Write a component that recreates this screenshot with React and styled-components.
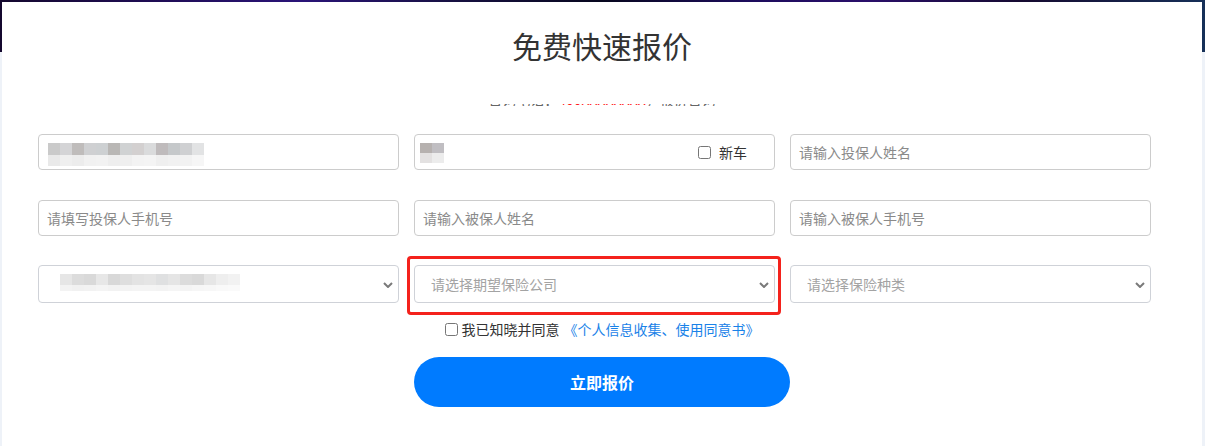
import React from "react";
import styled, { createGlobalStyle } from "styled-components";

const GlobalStyle = createGlobalStyle`
  html, body { margin: 0; padding: 0; }
  body {
    font-family: "Noto Sans CJK SC", "Noto Sans", "Liberation Sans", sans-serif;
    background: #eef2f8;
  }
  * { box-sizing: border-box; }
`;

const Page = styled.div`
  width: 1205px;
  height: 446px;
  overflow: hidden;
  padding: 2px 3px 0 2px;
  background:
    linear-gradient(90deg, #14082e 0%, #1e0c52 12%, #2a1478 25%, #161040 38%, #07071e 50%, #1c0c5c 62%, #2a0f6a 72%, #150a30 85%, #163058 100%) top / 100% 52px no-repeat,
    #eef2f8;
`;

const Panel = styled.div`
  background: #fff;
  height: 444px;
  padding-top: 23px;
`;

const Title = styled.h1`
  margin: 0;
  text-align: center;
  font-size: 30px;
  line-height: 40px;
  font-weight: 400;
  color: #333;
`;

const SubClip = styled.div`
  margin-top: 39px;
  height: 2px;
  overflow: hidden;
  text-align: center;
`;

const SubText = styled.div`
  margin-top: -13px;
  font-size: 14px;
  line-height: 16px;
  color: #666;
`;

const Red = styled.span`
  color: #ff1a1a;
`;

const Grid = styled.div`
  margin-top: 28px;
  padding-left: 36px;
  display: grid;
  grid-template-columns: repeat(3, 361px);
  column-gap: 15px;
`;

const Row = styled.div`
  display: contents;
`;

const Field = styled.div`
  position: relative;
  height: ${(p) => p.$h}px;
  margin-top: ${(p) => p.$top || 0}px;
`;

const Input = styled.input`
  width: 100%;
  height: 100%;
  border: 1px solid #cccccc;
  border-radius: 4px;
  padding: 0 ${(p) => (p.$padRight ? 90 : 8)}px 0 8px;
  font-family: inherit;
  font-size: 14px;
  color: #333;
  background: #fff;
  outline: none;
  &::placeholder {
    color: #8a8a8a;
  }
`;

const Select = styled.select`
  appearance: none;
  -webkit-appearance: none;
  width: 100%;
  height: 100%;
  border: 1px solid #cfd2d8;
  border-radius: 4px;
  padding: 0 24px 0 16px;
  font-family: inherit;
  font-size: 14px;
  color: #a3a3a3;
  background: #fff;
  outline: none;
`;

const Chevron = styled.svg`
  position: absolute;
  right: 6px;
  top: 50%;
  margin-top: -2px;
  pointer-events: none;
`;

const Highlight = styled.div`
  position: absolute;
  top: -9px;
  left: -7px;
  right: -6px;
  bottom: -12px;
  border: 3px solid #f4221c;
  border-radius: 4px;
  pointer-events: none;
`;

const NewCar = styled.label`
  position: absolute;
  right: 28px;
  top: 0;
  bottom: 0;
  display: flex;
  align-items: center;
  gap: 8px;
  font-size: 14px;
  color: #333;
`;

const Check = styled.input`
  margin: 0;
  width: 13px;
  height: 13px;
`;

const Mosaic = styled.div`
  position: absolute;
  left: ${(p) => p.$left}px;
  top: ${(p) => p.$top}px;
  display: grid;
  grid-auto-flow: row;
  pointer-events: none;
`;

const MosaicRow = styled.div`
  display: flex;
`;

const Cell = styled.div`
  width: ${(p) => p.$w}px;
  height: ${(p) => p.$h}px;
  background: ${(p) => p.$c};
`;

const Agreement = styled.div`
  margin-top: 16px;
  display: flex;
  justify-content: center;
  align-items: center;
  font-size: 14px;
  line-height: 20px;
  color: #333;
`;

const AgreeCheck = styled.input`
  margin: 0 4px 0 0;
  width: 13px;
  height: 13px;
`;

const Link = styled.a`
  color: #1a82e8;
  text-decoration: none;
  margin-left: 4px;
`;

const Submit = styled.button`
  display: block;
  margin: 18px auto 0;
  width: 376px;
  height: 50px;
  border: none;
  border-radius: 25px;
  background: #007bff;
  color: #fff;
  font-family: inherit;
  font-size: 16px;
  font-weight: 700;
  cursor: pointer;
`;

const ChevronIcon = () => (
  <Chevron width="10" height="6" viewBox="0 0 10 6">
    <polyline points="1,1 5,5 9,1" fill="none" stroke="#7a7a7a" strokeWidth="2" />
  </Chevron>
);

const MosaicBlock = ({ left, top, rows, w, h }) => (
  <Mosaic $left={left} $top={top}>
    {rows.map((r, i) => (
      <MosaicRow key={i}>
        {r.map((c, j) => (
          <Cell key={j} $w={w} $h={h[i]} $c={c} />
        ))}
      </MosaicRow>
    ))}
  </Mosaic>
);

const mosaic1 = [
  ["#cacaca", "#d4d4d6", "#bfbcbb", "#cfd0d2", "#cdd0d2", "#b9b7b5", "#d0d2d3", "#d3d0d0", "#dadbdc", "#bfbbbc", "#c5c8ca", "#cfd0d2", "#e2e3e4"],
  ["#e9e9e9", "#efefef", "#ececec", "#f1f1f1", "#f2f2f2", "#eeeeee", "#efefef", "#f3f3f3", "#f4f4f4", "#efefef", "#f1f1f1", "#f2f2f2", "#f6f6f6"],
];
const mosaic2 = [
  ["#b6b1af", "#c0bec2"],
  ["#e3e1e1", "#ececec"],
];
const mosaic3 = [
  ["#e6e6e6", "#dcdcdc", "#d9d9d9", "#e7e7e7", "#d8d8d8", "#dedede", "#e3e3e3", "#e5e5e5", "#dfe0e1", "#e5e5e5", "#dcdcdc", "#d9d9d9", "#e6e6e6", "#eeeeee", "#f2f2f2"],
  ["#f3f3f3", "#f1f1f1", "#f2f2f2", "#f4f4f4", "#f2f2f2", "#f3f3f3", "#f4f4f4", "#f4f4f4", "#f3f3f3", "#f5f5f5", "#f4f4f4", "#f6f6f6", "#f7f7f7", "#f9f9f9", "#fafafa"],
];

export default function App() {
  return (
    <>
      <GlobalStyle />
      <Page>
        <Panel>
          <Title>免费快速报价</Title>
          <SubClip>
            <SubText>
              咨询电话：<Red>400XXXXXXXX</Red>，报价咨询
            </SubText>
          </SubClip>
          <Grid>
            <Row>
              <Field $h={36}>
                <Input defaultValue="" />
                <MosaicBlock left={10} top={9} rows={mosaic1} w={12} h={[12, 11]} />
              </Field>
              <Field $h={36}>
                <Input $padRight defaultValue="" />
                <MosaicBlock left={6} top={9} rows={mosaic2} w={12} h={[10, 10]} />
                <NewCar>
                  <Check type="checkbox" />
                  新车
                </NewCar>
              </Field>
              <Field $h={36}>
                <Input placeholder="请输入投保人姓名" />
              </Field>
            </Row>
            <Row>
              <Field $h={36} $top={30}>
                <Input placeholder="请填写投保人手机号" />
              </Field>
              <Field $h={36} $top={30}>
                <Input placeholder="请输入被保人姓名" />
              </Field>
              <Field $h={36} $top={30}>
                <Input placeholder="请输入被保人手机号" />
              </Field>
            </Row>
            <Row>
              <Field $h={38} $top={29}>
                <Select defaultValue="">
                  <option value="" disabled></option>
                </Select>
                <MosaicBlock left={22} top={9} rows={mosaic3} w={12} h={[11, 6]} />
                <ChevronIcon />
              </Field>
              <Field $h={38} $top={29}>
                <Select defaultValue="">
                  <option value="" disabled>请选择期望保险公司</option>
                </Select>
                <ChevronIcon />
                <Highlight />
              </Field>
              <Field $h={38} $top={29}>
                <Select defaultValue="">
                  <option value="" disabled>请选择保险种类</option>
                </Select>
                <ChevronIcon />
              </Field>
            </Row>
          </Grid>
          <Agreement>
            <AgreeCheck type="checkbox" />
            我已知晓并同意
            <Link href="#">《个人信息收集、使用同意书》</Link>
          </Agreement>
          <Submit type="button">立即报价</Submit>
        </Panel>
      </Page>
    </>
  );
}
